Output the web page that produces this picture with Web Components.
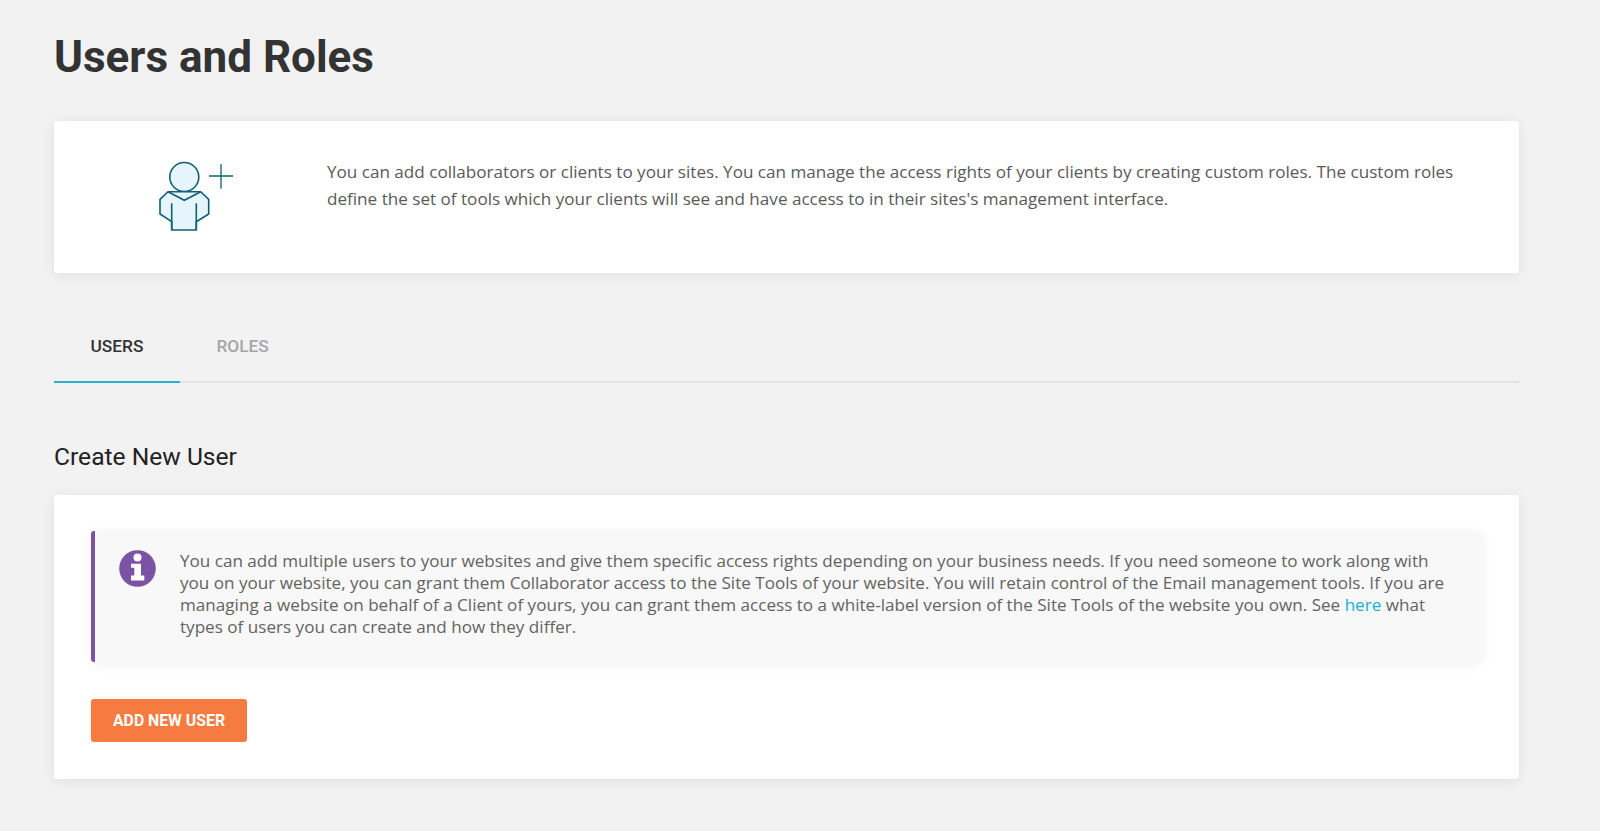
<!DOCTYPE html>
<html>
<head>
<meta charset="utf-8">
<title>Users and Roles</title>
<style>
  html, body { margin: 0; padding: 0; background: #f2f2f2; }
  body { font-family: "Open Sans", sans-serif; height: 831px; overflow: hidden; }
</style>
</head>
<body>
<users-page></users-page>

<script>
class PageTitle extends HTMLElement {
    connectedCallback() {
        this.attachShadow({ mode: 'open' });
        this.shadowRoot.innerHTML = `
            <style>
                :host { display: block; }
                h1 {
                    margin: 0;
                    font: 700 44px/56px Roboto, sans-serif;
                    color: #333;
                }
            </style>
            <h1><slot></slot></h1>
        `;
    }
}

class SgCard extends HTMLElement {
    connectedCallback() {
        this.attachShadow({ mode: 'open' });
        this.shadowRoot.innerHTML = `
            <style>
                :host {
                    display: block;
                    background: #fff;
                    border-radius: 3px;
                    box-shadow: 0 2px 14px rgba(0, 0, 0, 0.08);
                }
            </style>
            <slot></slot>
        `;
    }
}

class IntroBox extends HTMLElement {
    connectedCallback() {
        this.attachShadow({ mode: 'open' });
        this.shadowRoot.innerHTML = `
            <style>
                :host { display: block; }
                .wrap {
                    display: flex;
                    height: 152px;
                    box-sizing: border-box;
                    padding: 38px 54px 0 0;
                }
                .icon { width: 273px; flex: none; padding-left: 104px; box-sizing: border-box; }
                .icon svg { display: block; margin-top: 1px; }
                p {
                    margin: 0;
                    font: 400 17.1px/26.5px "Open Sans", sans-serif;
                    color: #5a5a5a;
                }
            </style>
            <div class="wrap">
                <div class="icon">
                    <svg width="78" height="72" viewBox="0 0 78 72" fill="none" stroke="#0f6073" stroke-width="1.6">
                        <circle cx="26.3" cy="17" r="14.5" fill="#e6f5fb"/>
                        <path d="M10 31.7 L42.7 31.7 L50.7 39.3 L50.7 54 L38.3 61.7 L38.3 70 L13.7 70 L13.7 61.7 L2 54 L2 39.3 Z" fill="#e6f5fb"/>
                        <path d="M10 31.7 L26.3 40.3 L42.7 31.7 M13.7 43.3 V70 M38.3 43.3 V70"/>
                        <path d="M51 16 H75 M63 4 V28.7" stroke-width="1.3"/>
                    </svg>
                </div>
                <p><slot></slot></p>
            </div>
        `;
    }
}

class TabBar extends HTMLElement {
    connectedCallback() {
        this.attachShadow({ mode: 'open' });
        this.shadowRoot.innerHTML = `
            <style>
                :host { display: flex; border-bottom: 2px solid #e2e2e2; }
                ::slotted(tab-item) { margin-bottom: -2px; }
            </style>
            <slot></slot>
        `;
    }
}

class TabItem extends HTMLElement {
    connectedCallback() {
        this.attachShadow({ mode: 'open' });
        this.shadowRoot.innerHTML = `
            <style>
                :host {
                    display: block;
                    padding: 0 36.5px;
                    height: 66px;
                    box-sizing: border-box;
                    font: 500 17.3px/58px Roboto, sans-serif;
                    color: #a6a6a6;
                    border-bottom: 2px solid transparent;
                }
                :host([active]) {
                    color: #333;
                    border-bottom-color: #22b4d2;
                }
            </style>
            <slot></slot>
        `;
    }
}

class NoticeBox extends HTMLElement {
    connectedCallback() {
        this.attachShadow({ mode: 'open' });
        this.shadowRoot.innerHTML = `
            <style>
                :host {
                    display: flex;
                    background: #f8f8f8;
                    border-left: 4px solid #7a53a5;
                    border-radius: 3px;
                    box-shadow: 0 2px 14px rgba(0, 0, 0, 0.06);
                    padding: 19px 29px 24px 24px;
                    gap: 24px;
                    font: 400 17.1px/22px "Open Sans", sans-serif;
                    color: #636363;
                }
                svg { flex: none; }
                ::slotted(a) { color: #14b1d0; text-decoration: none; }
            </style>
            <svg width="37" height="37" viewBox="0 0 37 37">
                <circle cx="18.5" cy="18.5" r="18.3" fill="#7a53a5"/>
                <circle cx="18.5" cy="7.5" r="4" fill="#fff"/>
                <path d="M12 13.8 H22 V25.5 H25.3 V30.5 H12 V25.5 H15.3 V17.8 H12 Z" fill="#fff"/>
            </svg>
            <div><slot></slot></div>
        `;
    }
}

class SgButton extends HTMLElement {
    connectedCallback() {
        this.attachShadow({ mode: 'open' });
        this.shadowRoot.innerHTML = `
            <style>
                :host {
                    display: inline-block;
                    box-sizing: border-box;
                    width: 156px;
                    text-align: center;
                    background: #f67b40;
                    color: #fff;
                    border-radius: 3px;
                    height: 43px;
                    font: 700 15.8px/43px Roboto, sans-serif;
                }
            </style>
            <slot></slot>
        `;
    }
}

class UsersPage extends HTMLElement {
    connectedCallback() {
        this.attachShadow({ mode: 'open' });
        this.shadowRoot.innerHTML = `
            <style>
                :host {
                    display: block;
                    padding: 29px 81px 0 54px;
                }
                page-title { margin-bottom: 36px; }
                tab-bar { margin-top: 44px; }
                h2 {
                    margin: 58px 0 22px;
                    font: 400 24.6px/32px Roboto, sans-serif;
                    color: #222;
                }
                .create { display: block; padding: 36px 36px 37px 37px; }
                notice-box { margin-bottom: 37px; }
                a { color: #14b1d0; text-decoration: none; }
            </style>
            <page-title>Users and Roles</page-title>
            <sg-card>
                <intro-box>You can add collaborators or clients to your sites. You can manage the access rights of your clients by creating custom roles. The custom roles define the set of tools which your clients will see and have access to in their sites's management interface.</intro-box>
            </sg-card>
            <tab-bar>
                <tab-item active>USERS</tab-item>
                <tab-item>ROLES</tab-item>
            </tab-bar>
            <h2>Create New User</h2>
            <sg-card class="create">
                <notice-box>You can add multiple users to your websites and give them specific access rights depending on your business needs. If you need someone to work along with you on your website, you can grant them Collaborator access to the Site Tools of your website. You will retain control of the Email management tools. If you are managing a website on behalf of a Client of yours, you can grant them access to a white-label version of the Site Tools of the website you own. See <a href="#">here</a> what types of users you can create and how they differ.</notice-box>
                <sg-button>ADD NEW USER</sg-button>
            </sg-card>
        `;
    }
}

customElements.define('page-title', PageTitle);
customElements.define('sg-card', SgCard);
customElements.define('intro-box', IntroBox);
customElements.define('tab-bar', TabBar);
customElements.define('tab-item', TabItem);
customElements.define('notice-box', NoticeBox);
customElements.define('sg-button', SgButton);
customElements.define('users-page', UsersPage);
</script>
</body>
</html>
